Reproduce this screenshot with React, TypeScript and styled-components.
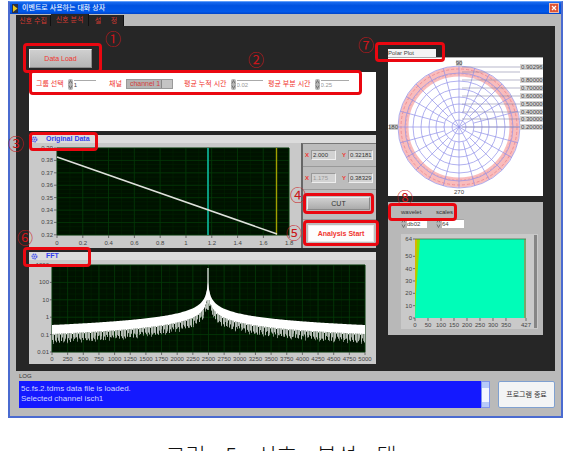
import React from "react";
import styled, { createGlobalStyle, css } from "styled-components";

const RED = "#ea0710";
const TEXT_RED = "#f0352f";
const SANS = '"Liberation Sans", "Noto Sans CJK KR", sans-serif';

const GlobalStyle = createGlobalStyle`
  * { box-sizing: border-box; }
  html, body { height: 100%; }
  body {
    margin: 0;
    background: #fff;
    overflow: hidden;
    font-family: ${SANS};
    font-size: 7px;
    line-height: 8px;
    color: #333;
  }
  button, input, select, textarea {
    font: inherit;
    margin: 0;
    padding: 0;
    border-radius: 0;
  }
`;

const Window = styled.main`
  margin: 1px 6px 0 8px;
  border: 2px solid #4a6bd0;
  border-top: 1px solid #5f9dfa;
  background: #bababa;
`;

const TitleBar = styled.header`
  display: flex;
  align-items: center;
  gap: 4px;
  height: 12px;
  padding: 0 2px;
  background: linear-gradient(#1a6cf0, #0052e0 30%, #0058ea 80%, #0044c8);
  color: #e8f0ff;
`;

const Title = styled.h1`
  flex: 1;
  margin: 0;
  font-size: 7px;
  line-height: 10px;
  font-weight: 500;
`;

const CloseButton = styled.button`
  display: flex;
  align-items: center;
  justify-content: center;
  width: 10px;
  height: 10px;
  border: 1px solid #f0b8a8;
  background: #dd5535;
`;

const Tabs = styled.nav`
  display: flex;
  align-items: flex-end;
  height: 12px;
  padding-left: 6px;
`;

const Tab = styled.button<{ $active?: boolean }>`
  width: ${(p) => (p.$active ? 38 : 35)}px;
  height: ${(p) => (p.$active ? 12 : 11)}px;
  border: 0;
  border-right: 1px solid #111;
  background: #262626;
  color: #cf3a32;
  white-space: pre;
`;

const Workspace = styled.section`
  display: grid;
  grid-template-columns: minmax(0, 347fr) minmax(0, 155fr);
  gap: 12px;
  margin: 0 6px 0 6px;
  padding: 23px 12px 7px 13px;
  background: #262626;
`;

const Column = styled.div`
  display: flex;
  flex-direction: column;
  gap: 4px;
`;

const Anchor = styled.div`
  position: relative;
`;

const Outline = styled.span<{ $t: number; $r?: number; $b: number; $l: number; $w?: number }>`
  position: absolute;
  top: ${(p) => p.$t}px;
  bottom: ${(p) => p.$b}px;
  left: ${(p) => p.$l}px;
  ${(p) => (p.$w ? css`width: ${p.$w}px;` : css`right: ${p.$r ?? 0}px;`)}
  border: 3px solid ${RED};
  border-radius: 4px;
  pointer-events: none;
  z-index: 2;
`;

const Mark = styled.span<{ $t: number; $l: number }>`
  position: absolute;
  top: ${(p) => p.$t}px;
  left: ${(p) => p.$l}px;
  width: 18px;
  font-family: "Noto Sans CJK KR", sans-serif;
  font-size: 16px;
  line-height: 18px;
  text-align: center;
  color: #c9161b;
  z-index: 3;
`;

const Button = styled.button<{ $light?: boolean }>`
  display: block;
  width: 100%;
  height: ${(p) => (p.$light ? 17 : 13)}px;
  border: 1px solid ${(p) => (p.$light ? "#e8e8e8" : "#8a8a8a")};
  border-top-color: #eee;
  border-left-color: #eee;
  background: ${(p) => (p.$light ? "#fdfdfd" : "linear-gradient(#d0d0d0, #ababab)")};
  color: ${(p) => (p.$light ? TEXT_RED : "#333")};
  font-weight: ${(p) => (p.$light ? 700 : 400)};
`;

const LoadButton = styled(Button)`
  width: 63px;
  height: 19px;
  background: linear-gradient(#cfcfcf, #b5b5b5);
  color: ${TEXT_RED};
`;

const Settings = styled.div`
  position: relative;
  height: 59px;
  padding-top: 4px;
  background: #fff;
`;

const Filters = styled.form`
  display: flex;
  align-items: center;
  height: 16px;
  padding: 0 24px 0 7px;
  color: ${TEXT_RED};
  white-space: nowrap;
`;

const Field = styled.label<{ $grow: number }>`
  display: flex;
  align-items: center;
  gap: 4px;
  flex: ${(p) => p.$grow} 1 0;
  min-width: 0;
`;

const Spin = styled.span`
  display: flex;
  align-items: center;
  gap: 1px;
`;

const NumberInput = styled.input<{ $w: number; $dim?: boolean }>`
  width: ${(p) => p.$w}px;
  height: 9px;
  border: 0;
  border-top: 1px solid #aaa;
  background: #fff;
  color: ${(p) => (p.$dim ? "#999" : "#444")};
  font-size: 6px;
`;

const ChannelSelect = styled.select`
  appearance: none;
  width: 47px;
  height: 10px;
  padding-left: 3px;
  border: 1px solid #999;
  background: linear-gradient(90deg, #b4b4b4 75%, #888 75%, #888 78%, #c4c4c4 78%);
  color: #d5403b;
`;

const Panel = styled.section`
  position: relative;
  background: #c9c9c9;
`;

const PanelHeader = styled.h2`
  display: flex;
  align-items: center;
  gap: 8px;
  height: 8px;
  margin: 0;
  padding-left: 2px;
  background: #dcdcdc;
  color: #3340f0;
  font-size: 7px;
  line-height: 8px;
  font-weight: 700;
`;

const Split = styled.div`
  display: grid;
  grid-template-columns: minmax(0, 272fr) minmax(0, 75fr);
`;

const Chart = styled.svg`
  display: block;
  width: 100%;
  height: auto;
  font-family: ${SANS};
  font-size: 6px;
  fill: #444;
`;

const Side = styled.div`
  display: flex;
  flex-direction: column;
  border-left: 2px solid #666;
  border-top: 1px solid #777;
  background: #bcbcbc;
`;

const Readouts = styled.div`
  display: flex;
  align-items: center;
  gap: 6px;
  height: 23px;
  padding: 0 3px 0 2px;
  border-bottom: 1px solid #999;
`;

const Readout = styled.label`
  display: flex;
  align-items: center;
  gap: 2px;
  flex: 1;
  color: ${TEXT_RED};
  font-size: 6px;
  font-weight: 700;
`;

const ReadoutInput = styled.input<{ $dim?: boolean }>`
  flex: 1;
  min-width: 0;
  width: 100%;
  height: 10px;
  padding-left: 1px;
  border: 1px solid #999;
  border-right-color: #eee;
  border-bottom-color: #eee;
  background: #d2d2d2;
  color: ${(p) => (p.$dim ? "#999" : "#333")};
  font-weight: 400;
`;

const Action = styled.div<{ $start?: boolean }>`
  position: relative;
  padding: ${(p) => (p.$start ? "5px 2px 6px 5px" : "7px 6px 9px 4px")};
  border-bottom: ${(p) => (p.$start ? 0 : 1)}px solid #999;
`;

const PolarTitle = styled.h2`
  width: 48px;
  height: 8px;
  margin: 0;
  background: #f4f4f4;
  color: #444;
  font-size: 6px;
  line-height: 8px;
  font-weight: 400;
`;

const PolarBox = styled.div`
  background: #fff;
  border-top: 1px solid #aaa;
`;

const Wavelet = styled.section`
  position: relative;
  padding: 5px 5px 6px 13px;
  margin-top: 2px;
  background: #b8b8b8;
`;

const WaveletFields = styled.div`
  display: flex;
  gap: 9px;
  height: 27px;
`;

const WaveletField = styled.label`
  display: flex;
  flex-direction: column;
  font-size: 6px;
  line-height: 11px;
  color: #333;
`;

const Footer = styled.footer`
  display: grid;
  grid-template-columns: minmax(0, 1fr) 57px;
  column-gap: 8px;
  padding: 1px 6px 8px 9px;
`;

const LogLabel = styled.label`
  grid-column: 1 / -1;
  font-size: 6px;
  line-height: 9px;
`;

const LogBox = styled.div`
  display: flex;
  height: 27px;
`;

const LogText = styled.textarea`
  flex: 1;
  min-width: 0;
  padding: 3px 2px;
  border: 0;
  background: #1419ff;
  color: #cfd4ff;
  font-size: 8px;
  line-height: 10px;
  resize: none;
  overflow: hidden;
`;

const Scrollbar = styled.span`
  width: 9px;
  border: 1px solid #7f95ea;
  background: linear-gradient(#b7cafa 6px, #f4f6ff 6px, #f4f6ff 20px, #b7cafa 20px);
`;

const ExitButton = styled.button`
  height: 27px;
  border: 1px solid #7fa0d0;
  border-radius: 2px;
  background: #f3f4f5;
  color: #333;
`;

const Caption = styled.p`
  margin: 20px 0 0;
  padding-right: 7px;
  font-family: "Noto Sans CJK KR", sans-serif;
  font-size: 22px;
  font-weight: 300;
  line-height: 32px;
  text-align: center;
  color: #111;
  white-space: pre;
`;

const Arrows = () => (
  <svg width="5" height="11" viewBox="0 0 5 11" aria-hidden="true">
    <rect x="0" y="0" width="5" height="11" rx="2" fill="#b5b5b5" />
    <path d="M1 4.5L2.5 1.5L4 4.5M1 6.5L2.5 9.5L4 6.5" fill="none" stroke="#666" strokeWidth="0.8" />
  </svg>
);

const Gear = () => (
  <svg width="7" height="7" viewBox="0 0 7 7" aria-hidden="true">
    <circle cx="3.5" cy="3.5" r="2.3" fill="none" stroke="#5560ee" strokeWidth="1.4" strokeDasharray="1.4 0.6" />
    <circle cx="3.5" cy="3.5" r="1" fill="#5560ee" />
  </svg>
);

const range = (n: number) => Array.from({ length: n }, (_, i) => i);

function Grid({ x, y, w, h, cols, rows }: { x: number; y: number; w: number; h: number; cols: number; rows: number }) {
  const minor = range(cols * 2 + 1).map((i) => `M${x + (w * i) / (cols * 2)} ${y}v${h}`).join("");
  const major = range(cols + 1).map((i) => `M${x + (w * i) / cols} ${y}v${h}`).join("");
  const level = range(rows + 1).map((i) => `M${x} ${y + (h * i) / rows}h${w}`).join("");
  const fine = range(rows * 3 + 1).map((i) => `M${x} ${y + (h * i) / (rows * 3)}h${w}`).join("");
  return (
    <g fill="none">
      <rect x={x} y={y} width={w} height={h} fill="#001200" />
      <path d={minor + fine} stroke="#002602" strokeWidth="0.5" />
      <path d={major + level} stroke="#053c08" strokeWidth="0.7" />
    </g>
  );
}

function OriginalChart() {
  const ys = ["0.39", "0.38", "0.37", "0.36", "0.35", "0.34", "0.33", "0.32"];
  const xs = ["0", "0.2", "0.4", "0.6", "0.8", "1", "1.2", "1.4", "1.6", "1.8"];
  return (
    <Chart viewBox="0 0 272 105" role="img" aria-label="Original Data">
      <Grid x={28} y={5} w={232} h={87} cols={9} rows={7} />
      {ys.map((t, i) => (
        <g key={t}>
          <text x="24" y={7 + i * 12.4} textAnchor="end">{t}</text>
          <path d={`M25 ${5 + i * 12.4}h3`} stroke="#444" strokeWidth="0.7" />
        </g>
      ))}
      {xs.map((t, i) => (
        <g key={t}>
          <text x={28 + i * 25.8} y="102" textAnchor="middle">{t}</text>
          <path d={`M${28 + i * 25.8} 92v3`} stroke="#444" strokeWidth="0.7" />
        </g>
      ))}
      <path d="M179 5v87" stroke="#0a9a80" strokeWidth="2" />
      <path d="M247.500 5v87" stroke="#a0a000" strokeWidth="1.400" />
      <path d="M28 14L248 91" stroke="#dfe2dc" strokeWidth="1.500" />
    </Chart>
  );
}

function FftChart() {
  const ys = ["1000", "100", "10", "1", "0.1", "0.01"];
  const left = 23;
  const right = 336;
  const peak = 179;
  const top = (x: number) => 65 - 16.5 * Math.log10(157 / Math.max(1.2, Math.abs(x - peak)));
  const xs = range(right - left + 1).map((i) => left + i);
  const body =
    xs.map((x, i) => `${i ? "L" : "M"}${x} ${top(x)}`).join("") +
    [...xs].reverse().map((x) => `L${x} ${top(x) + 10}`).join("") +
    "Z";
  const inner = xs.slice(0, -1);
  const spikes = inner
    .filter((x) => x % 3 !== 1)
    .map((x) => `M${x + 0.5} ${top(x) + 9}v${4 + ((x * 37) % 11) * 0.5}`)
    .join("");
  const haze = inner
    .filter((x) => x % 2 === 0)
    .map((x) => `M${x + 0.5} ${top(x) + 9}v${4 + ((x * 23) % 7)}`)
    .join("");
  return (
    <Chart viewBox="0 0 347 104" role="img" aria-label="FFT">
      <Grid x={left} y={5} w={313} h={87} cols={20} rows={5} />
      <path d={body} fill="#fff" />
      <path d={haze} stroke="#7c8a7c" strokeWidth="1" />
      <path d={spikes} stroke="#b4bcb4" strokeWidth="1" />
      <path d="M179 8v42" stroke="#e4e8e4" strokeWidth="1.300" />
      <path d="M176.500 40L179 22L181.500 40Z" fill="#fff" />
      {ys.map((t, i) => (
        <g key={t}>
          <text x="20" y={7 + i * 17.4} textAnchor="end">{t}</text>
          <path d={`M21 ${5 + i * 17.4}h2`} stroke="#444" strokeWidth="0.7" />
        </g>
      ))}
      {range(21).map((i) => (
        <g key={i}>
          <text x={left + i * 15.65} y="101" textAnchor="middle">{i * 250}</text>
          <path d={`M${left + i * 15.65} 92v3`} stroke="#444" strokeWidth="0.7" />
        </g>
      ))}
    </Chart>
  );
}

function PolarChart() {
  const cx = 71;
  const cy = 69;
  const spokes = range(24)
    .map((i) => {
      const a = (i * Math.PI) / 12;
      const r0 = i % 2 ? 15 : 0;
      return `M${cx + r0 * Math.cos(a)} ${cy + r0 * Math.sin(a)}L${cx + 61 * Math.cos(a)} ${cy + 61 * Math.sin(a)}`;
    })
    .join("");
  const levels = ["0.90296", "0.80000", "0.70000", "0.60000", "0.50000", "0.40000", "0.30000", "0.20000"];
  const levelY = [9, 22, 30, 38, 46, 54, 61, 69];
  return (
    <Chart viewBox="0 0 155 138" role="img" aria-label="Polar Plot">
      <circle cx={cx} cy={cy} r="55.5" fill="none" stroke="#f9bcbc" strokeWidth="10" />
      <circle cx={cx} cy={cy} r="58" fill="none" stroke="#ef8f96" strokeWidth="1" strokeDasharray="3 2" />
      <circle cx={cx} cy={cy} r="53" fill="none" stroke="#f2a0a4" strokeWidth="1" strokeDasharray="2 2" />
      <g fill="none" stroke="#8f8fe8" strokeWidth="0.7">
        {[7, 15, 23, 30, 38, 46, 54, 61].map((r) => (
          <circle key={r} cx={cx} cy={cy} r={r} />
        ))}
        <path d={spokes} />
      </g>
      <path d={[...levelY, 14].map((y) => `M74 ${y}H132`).join("")} stroke="#8888a8" strokeWidth="0.6" />
      {levels.map((t, i) => (
        <g key={t}>
          <rect x="132" y={levelY[i] - 3} width="23" height="6" fill="#d4d4d4" />
          <text x="133" y={levelY[i] + 2}>{t}</text>
        </g>
      ))}
      <rect x="68" y="2" width="6" height="6" fill="#ccc" />
      <text x="71" y="7" textAnchor="middle">90</text>
      <rect x="1" y="66" width="9" height="6" fill="#ccc" />
      <text x="5" y="71" textAnchor="middle">180</text>
      <text x="71" y="136" textAnchor="middle">270</text>
    </Chart>
  );
}

function WaveletChart() {
  const ys = [0, 10, 20, 30, 40, 50, 64];
  const xs = [0, 50, 100, 150, 200, 250, 300, 350, 427];
  const py = (v: number) => 84 - (v / 64) * 79;
  const px = (v: number) => 14 + (v / 427) * 111;
  return (
    <Chart viewBox="0 0 137 95" role="img" aria-label="Wavelet">
      <rect width="137" height="95" fill="#c9c9c9" />
      <rect x="14" y="5" width="111" height="79" fill="#00fdb8" />
      <path d="M14 5h5L15 60L14 84Z" fill="#8ee000" />
      <path d="M14 5h2L14.500 60H14Z" fill="#e0b000" />
      <path d="M124 5v79" stroke="#a08a50" strokeWidth="1.500" />
      <path d="M14 5h111" stroke="#407848" strokeWidth="0.8" />
      <rect x="133" y="1" width="3" height="93" fill="#858585" />
      {ys.map((v) => (
        <g key={v}>
          <text x="11" y={py(v) + 2} textAnchor="end">{v}</text>
          <path d={`M12 ${py(v)}h2`} stroke="#444" strokeWidth="0.7" />
        </g>
      ))}
      {xs.map((v) => (
        <g key={v}>
          <text x={px(v)} y="93" textAnchor="middle">{v}</text>
          <path d={`M${px(v)} 84v3`} stroke="#444" strokeWidth="0.7" />
        </g>
      ))}
    </Chart>
  );
}

function XY({ x, y, dim }: { x: string; y: string; dim?: boolean }) {
  return (
    <Readouts>
      <Readout>X<ReadoutInput readOnly $dim={dim} value={x} /></Readout>
      <Readout>Y<ReadoutInput readOnly value={y} /></Readout>
    </Readouts>
  );
}

export default function App() {
  return (
    <>
      <GlobalStyle />
      <Window>
        <TitleBar>
          <svg width="6" height="9" viewBox="0 0 6 9" aria-hidden="true">
            <rect width="6" height="9" fill="#26304a" />
            <path d="M1 1L5.500 4.500L1 8Z" fill="#e8c81e" />
          </svg>
          <Title>이벤트로 사용하는 대화 상자</Title>
          <CloseButton aria-label="닫기">
            <svg width="6" height="6" viewBox="0 0 6 6" aria-hidden="true">
              <path d="M1 1L5 5M5 1L1 5" stroke="#fff" strokeWidth="1.200" />
            </svg>
          </CloseButton>
        </TitleBar>
        <Tabs>
          <Tab>신호 수집</Tab>
          <Tab $active>신호 분석</Tab>
          <Tab>{"설     정"}</Tab>
        </Tabs>
        <Workspace>
          <Column>
            <Anchor>
              <LoadButton>Data Load</LoadButton>
              <Outline $t={-6} $b={-5} $l={-6} $w={79} />
              <Mark $t={-20} $l={75}>①</Mark>
              <Mark $t={1} $l={218}>②</Mark>
            </Anchor>
            <Settings>
              <Filters>
                <Field $grow={73}>
                  그룹 선택
                  <Spin><Arrows /><NumberInput $w={22} defaultValue="1" /></Spin>
                </Field>
                <Field $grow={75}>
                  채널
                  <ChannelSelect defaultValue="channel 1">
                    <option>channel 1</option>
                  </ChannelSelect>
                </Field>
                <Field $grow={84}>
                  평균 누적 시간
                  <Spin><Arrows /><NumberInput $w={26} $dim defaultValue="0.02" /></Spin>
                </Field>
                <Field $grow={84}>
                  평균 부분 시간
                  <Spin><Arrows /><NumberInput $w={28} $dim defaultValue="0.25" /></Spin>
                </Field>
              </Filters>
              <Outline $t={-2} $b={36} $l={0} $r={14} />
            </Settings>
            <Panel>
              <PanelHeader><Gear />Original Data</PanelHeader>
              <Split>
                <OriginalChart />
                <Side>
                  <XY x="2.000" y="0.32181" />
                  <XY x="1.175" y="0.38329" dim />
                  <Action>
                    <Button>CUT</Button>
                    <Outline $t={3} $b={5} $l={0} $r={2} />
                    <Mark $t={-5} $l={-14}>④</Mark>
                  </Action>
                  <Action $start>
                    <Button $light>Analysis Start</Button>
                    <Outline $t={0} $b={2} $l={0} $r={-3} />
                    <Mark $t={3} $l={-18}>⑤</Mark>
                  </Action>
                </Side>
              </Split>
              <Outline $t={-3} $b={97} $l={0} $w={69} />
              <Mark $t={-1} $l={-22}>③</Mark>
            </Panel>
            <Panel>
              <PanelHeader><Gear />FFT</PanelHeader>
              <FftChart />
              <Outline $t={-5} $b={97} $l={-6} $w={68} />
              <Mark $t={-24} $l={-13}>⑥</Mark>
            </Panel>
          </Column>
          <Column>
            <Anchor>
              <PolarTitle>Polar Plot</PolarTitle>
              <PolarBox><PolarChart /></PolarBox>
              <Outline $t={-7} $b={134} $l={-13} $w={70} />
              <Mark $t={-14} $l={-31}>⑦</Mark>
            </Anchor>
            <Wavelet>
              <WaveletFields>
                <WaveletField>
                  wavelet
                  <Spin><Arrows /><NumberInput $w={20} defaultValue="db02" /></Spin>
                </WaveletField>
                <WaveletField>
                  scales
                  <Spin><Arrows /><NumberInput $w={22} defaultValue="64" /></Spin>
                </WaveletField>
              </WaveletFields>
              <WaveletChart />
              <Outline $t={1} $b={114} $l={0} $w={69} />
              <Mark $t={-14} $l={8}>⑧</Mark>
            </Wavelet>
          </Column>
        </Workspace>
        <Footer>
          <LogLabel htmlFor="log">LOG</LogLabel>
          <LogBox>
            <LogText id="log" readOnly value={"5c.fs.2.tdms data file is loaded.\nSelected channel isch1"} />
            <Scrollbar />
          </LogBox>
          <ExitButton>프로그램 종료</ExitButton>
        </Footer>
      </Window>
      <Caption>{"그림    5    신호    분석    탭"}</Caption>
    </>
  );
}
